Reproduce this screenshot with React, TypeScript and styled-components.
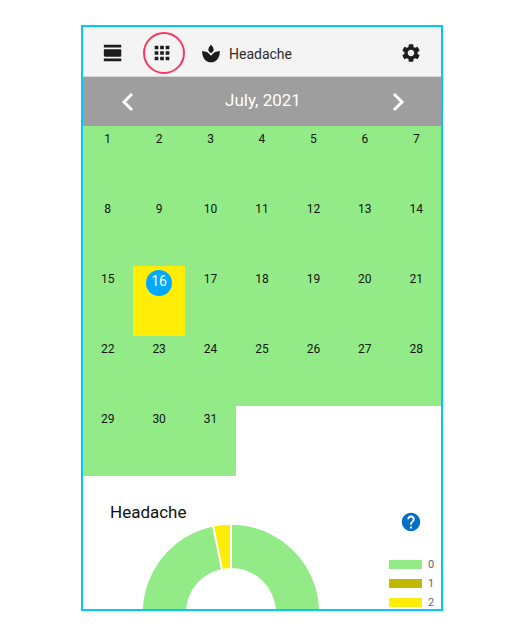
import React from "react";
import styled, { createGlobalStyle } from "styled-components";

const GlobalStyle = createGlobalStyle`
  *, *::before, *::after { box-sizing: border-box; }
  body {
    margin: 0;
    background: #fff;
    color: #101510;
    font-family: Roboto, "Liberation Sans", sans-serif;
  }
  h1, h2 { margin: 0; font-weight: 400; }
`;

const Page = styled.div`
  display: flex;
  height: 100vh;
  padding: 25px 78px 25px 81px;
`;

const Screen = styled.main`
  flex: 1;
  min-width: 0;
  overflow: hidden;
  border: 2px solid #00c8ff;
`;

const Toolbar = styled.header`
  display: flex;
  align-items: center;
  height: 50px;
  padding: 2px 16px 0 9px;
  background: #f4f4f4;
  border-bottom: 1px solid #d6d6d6;
  color: #1c1c1c;
`;

const IconButton = styled.button<{ $ring?: boolean }>`
  display: grid;
  place-items: center;
  flex: none;
  width: 42px;
  height: 42px;
  margin: 1px 0 0;
  padding: 0;
  padding-right: ${(p) => (p.$ring ? 4 : 0)}px;
  border: 2px solid ${(p) => (p.$ring ? "#f8375c" : "transparent")};
  border-radius: 50%;
  background: none;
  color: inherit;

  & + & { margin-left: 9px; }
`;

const Tracker = styled.div`
  display: flex;
  flex: 1;
  align-items: center;
  gap: 7px;
  margin-left: 15px;
  padding-top: 2px;
`;

const TrackerName = styled.h1`
  font-size: 14px;
  line-height: 20px;
  color: #2c2c2c;
`;

const SettingsButton = styled(IconButton)`
  width: 28px;
`;

const MonthBar = styled.nav`
  display: flex;
  align-items: center;
  justify-content: space-between;
  height: 49px;
  padding: 0 28px 0 30px;
  background: #9e9e9e;
  color: #fff;
`;

const ArrowButton = styled.button`
  display: grid;
  place-items: center;
  width: 30px;
  height: 30px;
  padding: 0;
  border: 0;
  background: none;
  color: inherit;
`;

const MonthName = styled.h2`
  padding-bottom: 3px;
  font-size: 17px;
  line-height: 22px;
`;

const Calendar = styled.div`
  display: grid;
  grid-template-columns: repeat(7, 1fr);
  grid-auto-rows: 70px;
  margin: 0 -1px;
`;

const Day = styled.div<{ $level: 0 | 2 }>`
  display: flex;
  justify-content: center;
  align-items: flex-start;
  padding-top: 4px;
  background: ${(p) => (p.$level === 2 ? "#ffed08" : "#93eb87")};
`;

const DayNumber = styled.span<{ $today: boolean }>`
  width: 26px;
  height: 26px;
  border-radius: 50%;
  text-align: center;
  font-size: ${(p) => (p.$today ? 14 : 12)}px;
  line-height: ${(p) => (p.$today ? 22 : 18)}px;
  background: ${(p) => (p.$today ? "#00a8ff" : "none")};
  color: ${(p) => (p.$today ? "#fff" : "inherit")};
`;

const Summary = styled.section`
  display: grid;
  grid-template-columns: 1fr 52px;
  padding: 25px 0 0 27px;
`;

const SummaryTitle = styled.h2`
  font-size: 17px;
  line-height: 22px;
  color: #101010;
`;

const Donut = styled.svg`
  display: block;
  width: 180px;
  height: 180px;
  margin-left: 31px;
`;

const Side = styled.aside`
  display: flex;
  flex-direction: column;
`;

const HelpButton = styled.button`
  display: grid;
  place-items: center;
  width: 22px;
  height: 22px;
  margin: 10px 0 22px 11px;
  padding: 0;
  border: 0;
  background: none;
  color: #0570c4;
`;

const Legend = styled.ul`
  margin: 0;
  padding: 0;
  list-style: none;
`;

const LegendItem = styled.li<{ $color: string }>`
  display: flex;
  align-items: center;
  gap: 6px;
  height: 19px;
  font-size: 11px;
  line-height: 13px;
  color: #666;

  &::before {
    content: "";
    width: 33px;
    height: 9px;
    background: ${(p) => p.$color};
  }
`;

const Icon = ({ d, size = 22 }: { d: string; size?: number }) => (
  <svg width={size} height={size} viewBox="0 0 24 24" fill="currentColor" aria-hidden="true">
    <path d={d} />
  </svg>
);

const icons = {
  day: "M2 21h19v-3H2v3zM20 8H3c-.55 0-1 .45-1 1v6c0 .55.45 1 1 1h17c.55 0 1-.45 1-1V9c0-.55-.45-1-1-1zM2 3v3h19V3H2z",
  apps: "M4 8h4V4H4v4zm6 12h4v-4h-4v4zm-6 0h4v-4H4v4zm0-6h4v-4H4v4zm6 0h4v-4h-4v4zm6-10v4h4V4h-4zm-6 4h4V4h-4v4zm6 6h4v-4h-4v4zm0 6h4v-4h-4v4z",
  plant: "M12 2c1.800 1.800 2.900 3.600 2.900 5.300 0 1.500-1.100 2.700-2.900 3.700-1.800-1-2.900-2.200-2.900-3.700C9.100 5.600 10.200 3.800 12 2zM2.300 8.600c4.300.2 7.700 2 9.700 5.400 2-3.400 5.400-5.200 9.700-5.400 0 7.400-3.700 12.400-9.700 12.400S2.300 16 2.300 8.600z",
  gear: "M19.14 12.94c.04-.3.06-.61.06-.94 0-.32-.02-.64-.07-.94l2.03-1.58c.18-.14.23-.41.12-.61l-1.92-3.32c-.12-.22-.37-.29-.59-.22l-2.39.96c-.5-.38-1.03-.7-1.62-.94l-.36-2.54c-.04-.24-.24-.41-.48-.41h-3.84c-.24 0-.43.17-.47.41l-.36 2.54c-.59.24-1.13.57-1.62.94l-2.39-.96c-.22-.08-.47 0-.59.22L2.74 8.87c-.12.21-.08.47.12.61l2.03 1.58c-.05.3-.09.63-.09.94s.02.64.07.94l-2.03 1.58c-.18.14-.23.41-.12.61l1.92 3.32c.12.22.37.29.59.22l2.39-.96c.5.38 1.03.7 1.62.94l.36 2.54c.05.24.24.41.48.41h3.84c.24 0 .44-.17.47-.41l.36-2.54c.59-.24 1.13-.56 1.62-.94l2.39.96c.22.08.47 0 .59-.22l1.92-3.32c.12-.22.07-.47-.12-.61l-2.01-1.58zM12 15.6c-1.98 0-3.6-1.62-3.6-3.6s1.62-3.6 3.6-3.6 3.6 1.62 3.6 3.6-1.62 3.6-3.6 3.6z",
  help: "M12 2C6.48 2 2 6.48 2 12s4.480 10 10 10 10-4.480 10-10S17.520 2 12 2zm1 17h-2v-2h2v2zm2.070-7.750l-.9.920C13.450 12.900 13 13.500 13 15h-2v-.5c0-1.100.45-2.100 1.170-2.830l1.240-1.260c.37-.36.59-.86.59-1.410 0-1.100-.9-2-2-2s-2 .9-2 2H8c0-2.210 1.790-4 4-4s4 1.790 4 4c0 .88-.36 1.680-.93 2.250z",
};

const Chevron = ({ points }: { points: string }) => (
  <svg width="20" height="20" viewBox="0 0 20 20" fill="none" stroke="currentColor" strokeWidth="3" aria-hidden="true">
    <polyline points={points} />
  </svg>
);

const days = Array.from({ length: 31 }, (_, i) => i + 1);
const today = 16;

const legend = [
  { label: "0", color: "#93eb87" },
  { label: "1", color: "#c0b900" },
  { label: "2", color: "#ffed08" },
];

const arc = (from: number, to: number) => {
  const at = (radius: number, turn: number) => {
    const a = turn * 2 * Math.PI;
    return `${100 + radius * Math.sin(a)} ${100 - radius * Math.cos(a)}`;
  };
  const large = to - from > 0.5 ? 1 : 0;
  return `M${at(99, from)}A99 99 0 ${large} 1 ${at(99, to)}L${at(49, to)}A49 49 0 ${large} 0 ${at(49, from)}Z`;
};

export default function App() {
  const share = 30 / 31;
  return (
    <>
      <GlobalStyle />
      <Page>
        <Screen>
          <Toolbar>
            <IconButton aria-label="Day view"><Icon d={icons.day} /></IconButton>
            <IconButton $ring aria-label="Month view"><Icon d={icons.apps} /></IconButton>
            <Tracker>
              <Icon d={icons.plant} />
              <TrackerName>Headache</TrackerName>
            </Tracker>
            <SettingsButton aria-label="Settings"><Icon d={icons.gear} /></SettingsButton>
          </Toolbar>
          <MonthBar aria-label="Month">
            <ArrowButton aria-label="Previous month"><Chevron points="14,2 6,10 14,18" /></ArrowButton>
            <MonthName>July, 2021</MonthName>
            <ArrowButton aria-label="Next month"><Chevron points="6,2 14,10 6,18" /></ArrowButton>
          </MonthBar>
          <Calendar>
            {days.map((day) => (
              <Day key={day} $level={day === today ? 2 : 0}>
                <DayNumber $today={day === today}>{day}</DayNumber>
              </Day>
            ))}
          </Calendar>
          <Summary>
            <div>
              <SummaryTitle>Headache</SummaryTitle>
              <Donut viewBox="0 0 200 200" role="img" aria-label="Share of days by level">
                <g stroke="#fff" strokeWidth="2">
                  <path d={arc(0, share)} fill="#93eb87" />
                  <path d={arc(share, 1)} fill="#ffed08" />
                </g>
              </Donut>
            </div>
            <Side>
              <HelpButton aria-label="Help"><Icon d={icons.help} /></HelpButton>
              <Legend>
                {legend.map((item) => (
                  <LegendItem key={item.label} $color={item.color}>{item.label}</LegendItem>
                ))}
              </Legend>
            </Side>
          </Summary>
        </Screen>
      </Page>
    </>
  );
}
